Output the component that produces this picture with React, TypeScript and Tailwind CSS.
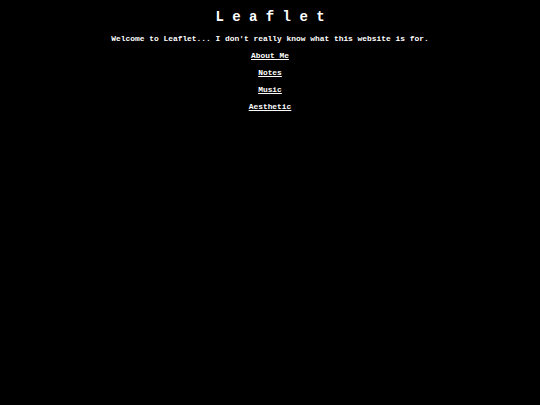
export default function App() {
  const links = ["About Me", "Notes", "Music", "Aesthetic"];

  return (
    <div className="min-h-[405px] w-full bg-black text-white font-['Liberation_Mono','Courier_New',monospace] font-bold">
      <div className="flex flex-col items-center pt-[10px]">
        <h1 className="text-[14px] leading-[14px] tracking-[8.4px] pl-[8.4px]">Leaflet</h1>
        <p className="mt-[10px] text-[7.9px] leading-[10px]">
          Welcome to Leaflet... I don't really know what this website is for.
        </p>
        <div className="mt-[7px] flex flex-col items-center gap-[7px]">
          {links.map((link) => (
            <a key={link} href="#" className="text-[7.9px] leading-[10px] underline underline-offset-[1px]">
              {link}
            </a>
          ))}
        </div>
      </div>
    </div>
  );
}
